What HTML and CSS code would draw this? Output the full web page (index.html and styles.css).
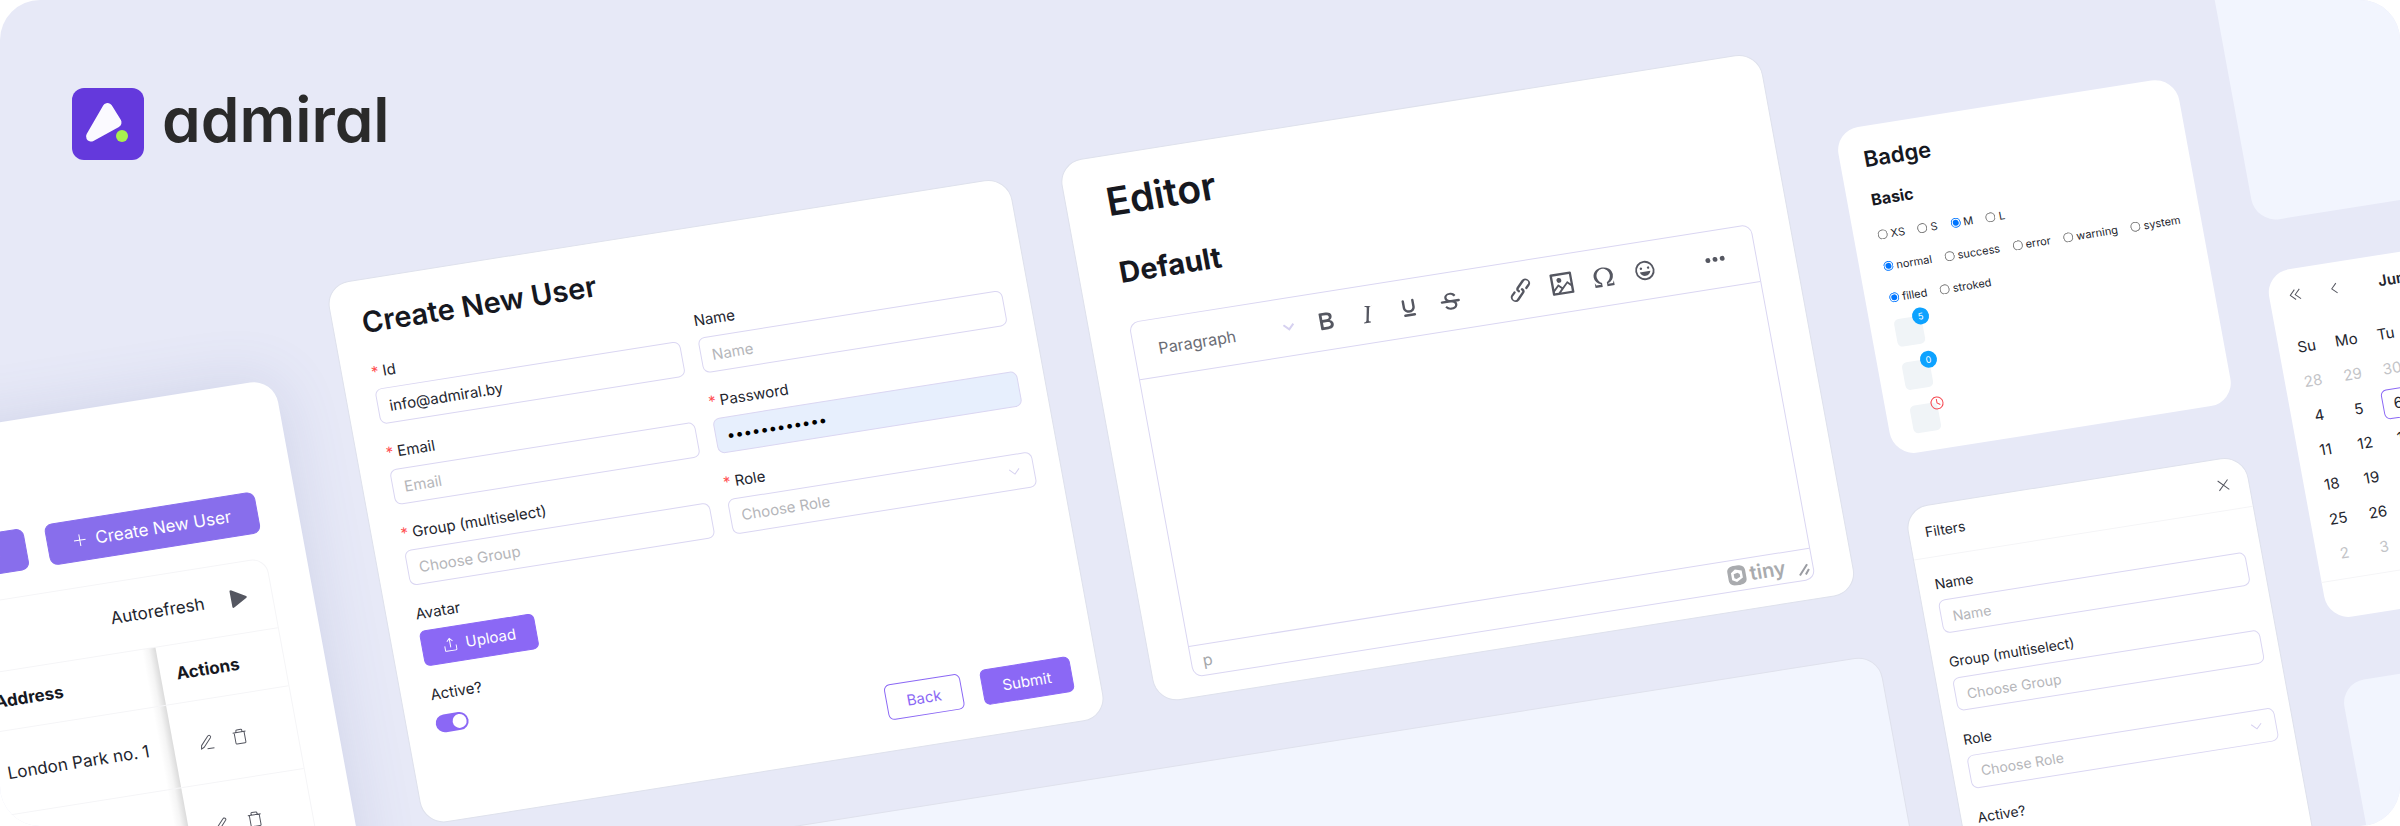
FILE: index.html
```
<!DOCTYPE html>
<html lang="en">
  <head>
    <meta charset="UTF-8" />
    <meta name="viewport" content="width=device-width, initial-scale=1.0" />
    <title>Admiral</title>
    <link rel="stylesheet" href="styles.css">
  </head>
  <body>
    <main class="banner">
      <div class="board">
        <!-- users table -->
        <div class="column column-table">
          <section class="card users">
            <div class="users-buttons">
              <button class="button button-large">Filters</button>
              <button class="button button-large">
                <svg width="12" height="12" viewBox="0 0 12 12" fill="none" stroke="currentColor"><path d="M6 0v12M0 6h12" /></svg>
                Create New User
              </button>
            </div>
            <div class="users-box">
              <div class="users-toolbar">
                <span>Autorefresh</span>
                <button class="icon-button" aria-label="Start autorefresh">
                  <svg width="18" height="18" viewBox="0 0 18 18" fill="#555761" stroke="#555761" stroke-width="2" stroke-linejoin="round"><path d="M2 1l14 8-14 8z" /></svg>
                </button>
              </div>
              <table class="users-table">
                <thead>
                  <tr>
                    <th>Address</th>
                    <th class="sticky">Actions</th>
                  </tr>
                </thead>
                <tbody>
                  <tr>
                    <td>London Park no. 1</td>
                    <td class="sticky">
                      <div class="row-actions">
                        <button class="icon-button" aria-label="Edit">
                          <svg width="18" height="18" viewBox="0 0 18 18" fill="none" stroke="#555761" stroke-linejoin="round"><path d="M3 15.500l.7-3.500L11.500 3.500a1.500 1.500 0 0 1 2.300 2L6 14zM9 16h7" /></svg>
                        </button>
                        <button class="icon-button" aria-label="Delete">
                          <svg width="18" height="18" viewBox="0 0 18 18" fill="none" stroke="#555761" stroke-linejoin="round"><path d="M2.500 4.500h13M4 4.500V15a1 1 0 0 0 1 1h8a1 1 0 0 0 1-1V4.500M6 4.500V3a1 1 0 0 1 1-1h4a1 1 0 0 1 1 1v1.500" /></svg>
                        </button>
                      </div>
                    </td>
                  </tr>
                  <tr>
                    <td>London Park no. 2</td>
                    <td class="sticky">
                      <div class="row-actions">
                        <button class="icon-button" aria-label="Edit">
                          <svg width="18" height="18" viewBox="0 0 18 18" fill="none" stroke="#555761" stroke-linejoin="round"><path d="M3 15.500l.7-3.500L11.500 3.500a1.500 1.500 0 0 1 2.300 2L6 14zM9 16h7" /></svg>
                        </button>
                        <button class="icon-button" aria-label="Delete">
                          <svg width="18" height="18" viewBox="0 0 18 18" fill="none" stroke="#555761" stroke-linejoin="round"><path d="M2.500 4.500h13M4 4.500V15a1 1 0 0 0 1 1h8a1 1 0 0 0 1-1V4.500M6 4.500V3a1 1 0 0 1 1-1h4a1 1 0 0 1 1 1v1.500" /></svg>
                        </button>
                      </div>
                    </td>
                  </tr>
                </tbody>
              </table>
            </div>
          </section>
        </div>

        <div class="column column-main">
          <div class="main-row">
            <!-- create form -->
            <form class="card create">
              <h1 class="create-title">Create New User</h1>
              <div class="create-grid">
                <div class="field">
                  <label class="required" for="user-id">Id</label>
                  <input class="control" id="user-id" type="text" value="info@admiral.by" />
                </div>
                <div class="field">
                  <label for="user-name">Name</label>
                  <input class="control" id="user-name" type="text" placeholder="Name" />
                </div>
                <div class="field">
                  <label class="required" for="user-email">Email</label>
                  <input class="control" id="user-email" type="text" placeholder="Email" />
                </div>
                <div class="field">
                  <label class="required" for="user-password">Password</label>
                  <input class="control autofilled" id="user-password" type="password" value="administrato" />
                </div>
                <div class="field">
                  <label class="required" for="user-group">Group (multiselect)</label>
                  <input class="control" id="user-group" type="text" placeholder="Choose Group" />
                </div>
                <div class="field">
                  <label class="required" for="user-role">Role</label>
                  <div class="select-wrap">
                    <select class="control" id="user-role"><option>Choose Role</option></select>
                    <svg class="chevron" width="12" height="8" viewBox="0 0 12 8" fill="none" stroke="currentColor"><path d="M1 1l5 5 5-5" /></svg>
                  </div>
                </div>
                <div class="field">
                  <label for="user-avatar">Avatar</label>
                  <button class="button upload" id="user-avatar" type="button">
                    <svg width="16" height="16" viewBox="0 0 16 16" fill="none" stroke="currentColor"><path d="M8 11V2M5 4.500L8 1.500l3 3M2 9v4.500a1 1 0 0 0 1 1h10a1 1 0 0 0 1-1V9" /></svg>
                    Upload
                  </button>
                </div>
              </div>
              <div class="field active-field">
                <label for="user-active">Active?</label>
                <input class="switch" id="user-active" type="checkbox" checked />
              </div>
              <div class="create-actions">
                <button class="button button-outline" type="button">Back</button>
                <button class="button" type="button">Submit</button>
              </div>
            </form>

            <!-- text editor -->
            <section class="card editor">
              <h2 class="editor-title">Editor</h2>
              <h3 class="editor-subtitle">Default</h3>
              <div class="editor-box">
                <div class="toolbar">
                  <div class="select-wrap toolbar-format">
                    <select aria-label="Block format"><option>Paragraph</option></select>
                    <svg class="chevron" width="12" height="8" viewBox="0 0 12 8" fill="none" stroke="currentColor" stroke-width="2"><path d="M1 1l5 5 5-5" /></svg>
                  </div>
                  <div class="toolbar-group">
                    <button class="tool" aria-label="Bold"><svg viewBox="0 0 24 24"><path d="M7.800 19c-.3 0-.5 0-.6-.2l-.2-.5V5.700c0-.2 0-.4.2-.5l.6-.2h5c1.500 0 2.700.3 3.500 1 .7.600 1.100 1.400 1.100 2.500a3 3 0 0 1-.6 1.900c-.4.600-1 1-1.600 1.200.4.100.9.300 1.300.6s.8.700 1 1.200c.4.400.5 1 .5 1.600 0 1.300-.4 2.300-1.300 3-.8.700-2.100 1-3.800 1H7.800Zm5-8.300c.6 0 1.200-.1 1.600-.5.4-.3.6-.7.6-1.300 0-1.100-.8-1.700-2.300-1.700H9.300v3.500h3.400Zm.5 6c.7 0 1.300-.1 1.700-.4.4-.4.6-.9.6-1.500s-.2-1-.7-1.400c-.4-.3-1-.4-2-.4H9.400v3.800h4Z" /></svg></button>
                    <button class="tool" aria-label="Italic"><svg viewBox="0 0 24 24"><path d="m16.700 4.700-.1.900h-.3c-.6 0-1 0-1.400.3-.3.300-.4.600-.5 1.100l-2.100 9.800v.6c0 .5.400.8 1.400.8h.2l-.2.800H8l.2-.8h.2c1.100 0 1.800-.5 2-1.500l2-9.800.1-.5c0-.6-.4-.8-1.400-.8h-.3l.2-.9h5.800Z" /></svg></button>
                    <button class="tool" aria-label="Underline"><svg viewBox="0 0 24 24"><path d="M16 5c.6 0 1 .4 1 1v5.500a4 4 0 0 1-.4 1.800l-1 1.400a5.300 5.300 0 0 1-5.500 1 5 5 0 0 1-1.600-1c-.5-.4-.8-.9-1.100-1.400a4 4 0 0 1-.4-1.800V6c0-.6.4-1 1-1s1 .4 1 1v5.500c0 .3 0 .6.2 1l.6.700a3.300 3.300 0 0 0 2.200.8 3.400 3.400 0 0 0 2.200-.8c.3-.2.4-.5.6-.8l.2-.9V6c0-.6.4-1 1-1ZM8 17h8c.6 0 1 .4 1 1s-.4 1-1 1H8a1 1 0 0 1 0-2Z" /></svg></button>
                    <button class="tool" aria-label="Strikethrough"><svg viewBox="0 0 24 24"><path d="M15.600 8.500c-.5-.7-1-1.100-1.300-1.300-.6-.4-1.300-.6-2-.6-2.700 0-2.800 1.700-2.800 2.100 0 1.600 1.800 2 3.200 2.300 4.400.9 4.600 2.800 4.600 3.900 0 1.400-.7 4.100-5 4.100A6.200 6.200 0 0 1 7 16.400l1.500-1.100c.4.600 1.600 2 3.700 2 1.600 0 2.500-.4 3-1.200.4-.8.3-2-.8-2.600-.7-.4-1.600-.7-2.900-1-1-.2-3.900-.8-3.900-3.600C7.600 6 10.300 5 12.400 5c2.900 0 4.200 1.600 4.700 2.400l-1.500 1.100Z" /><path d="M5 11h14a1 1 0 0 1 0 2H5a1 1 0 0 1 0-2Z" /></svg></button>
                  </div>
                  <div class="toolbar-group">
                    <button class="tool" aria-label="Link"><svg viewBox="0 0 24 24"><path d="M6.200 12.300a1 1 0 0 1 1.400 1.400l-2 2a2 2 0 1 0 2.600 2.800l4.800-4.800a1 1 0 0 0 0-1.400 1 1 0 1 1 1.400-1.300 2.900 2.900 0 0 1 0 4L9.600 20a3.900 3.900 0 0 1-5.500-5.500l2-2Zm11.600-.6a1 1 0 0 1-1.400-1.400l2-2a2 2 0 1 0-2.600-2.800L11 10.300a1 1 0 0 0 0 1.400A1 1 0 1 1 9.600 13a2.900 2.900 0 0 1 0-4L14.400 4a3.900 3.900 0 0 1 5.500 5.500l-2 2Z" /></svg></button>
                    <button class="tool" aria-label="Image"><svg viewBox="0 0 24 24"><path fill-rule="evenodd" d="m5 15.700 3.300-3.200c.3-.3.7-.3 1 0L12 15l4.100-4c.3-.4.800-.4 1 0l2 1.900V5H5v10.700ZM5 18V19h3l2.800-2.900-2-2L5 17.900Zm14-3-2.500-2.400-6.400 6.500H19v-4ZM4 3h16c.6 0 1 .4 1 1v16c0 .6-.4 1-1 1H4a1 1 0 0 1-1-1V4c0-.6.4-1 1-1Zm6 8a2 2 0 1 0 0-4 2 2 0 0 0 0 4Z" /></svg></button>
                    <button class="tool" aria-label="Special character"><svg viewBox="0 0 24 24"><path d="M15 18h4l1-2v4h-6v-3.300l1.400-1a6 6 0 0 0 1.800-2.900 6.300 6.300 0 0 0-.1-4.100 5.800 5.800 0 0 0-3-3.200c-.6-.3-1.300-.5-2.100-.5a5.100 5.100 0 0 0-3.900 1.800 6.300 6.300 0 0 0-1.300 6 6.200 6.200 0 0 0 1.800 3l1.400.9V20H4v-4l1 2h4v-.5l-2-1L5.400 15A6.500 6.500 0 0 1 4 11c0-1 .2-1.900.6-2.700A7 7 0 0 1 6.300 6C7.100 5.400 8 5 9 4.500c1-.3 2-.5 3.100-.5a8.800 8.800 0 0 1 5.700 2 7 7 0 0 1 1.700 2.300 6 6 0 0 1 .2 4.800c-.2.700-.6 1.300-1 1.900a7.600 7.600 0 0 1-3.600 2.500v.5Z" /></svg></button>
                    <button class="tool" aria-label="Emoji"><svg viewBox="0 0 24 24"><path fill-rule="evenodd" d="M9 11c.6 0 1-.4 1-1s-.4-1-1-1a1 1 0 0 0-1 1c0 .6.400 1 1 1Zm6 0c.6 0 1-.4 1-1s-.4-1-1-1a1 1 0 0 0-1 1c0 .6.400 1 1 1Zm-3 5.500c2.100 0 4-1.500 4.400-3.500H7.600c.5 2 2.300 3.500 4.400 3.500ZM12 4a8 8 0 1 0 0 16 8 8 0 0 0 0-16Zm0 14.500a6.500 6.500 0 1 1 0-13 6.500 6.500 0 0 1 0 13Z" /></svg></button>
                  </div>
                  <div class="toolbar-group">
                    <button class="tool" aria-label="More"><svg viewBox="0 0 24 24"><circle cx="6" cy="12" r="2" /><circle cx="12" cy="12" r="2" /><circle cx="18" cy="12" r="2" /></svg></button>
                  </div>
                </div>
                <textarea class="editor-area" aria-label="Editor content"></textarea>
                <div class="statusbar">
                  <span class="path">p</span>
                  <a class="tiny" href="#">
                    <svg width="20" height="20" viewBox="0 0 20 20"><path fill-rule="evenodd" d="M10 0c4 0 9 1 9 6v8c0 5-5 6-9 6s-9-1-9-6V6c0-5 5-6 9-6zM9 4L4.500 7v7L9 16.500l6.500-3.500V6z" /><path d="M7 8.500l4-1 2 1.500v3l-4 1.500-2-1z" /></svg>
                    tiny
                  </a>
                  <svg class="resize" width="12" height="12" viewBox="0 0 12 12" fill="none" stroke="#9a9ca2" stroke-width="2"><path d="M1 11L10 1M7 11l4-5" /></svg>
                </div>
              </div>
            </section>
          </div>
          <div class="blank blank-wide"></div>
        </div>

        <div class="column column-side">
          <!-- badges -->
          <section class="card badges">
            <h2 class="badges-title">Badge</h2>
            <h3 class="badges-subtitle">Basic</h3>
            <div class="radios">
              <label><input type="radio" name="size" />XS</label>
              <label><input type="radio" name="size" />S</label>
              <label><input type="radio" name="size" checked />M</label>
              <label><input type="radio" name="size" />L</label>
            </div>
            <div class="radios">
              <label><input type="radio" name="status" checked />normal</label>
              <label><input type="radio" name="status" />success</label>
              <label><input type="radio" name="status" />error</label>
              <label><input type="radio" name="status" />warning</label>
              <label><input type="radio" name="status" />system</label>
            </div>
            <div class="radios">
              <label><input type="radio" name="look" checked />filled</label>
              <label><input type="radio" name="look" />stroked</label>
            </div>
            <div class="badge-list">
              <div class="badge-box"><span class="badge">5</span></div>
              <div class="badge-box"><span class="badge">0</span></div>
              <div class="badge-box">
                <span class="badge badge-icon">
                  <svg width="14" height="14" viewBox="0 0 14 14" fill="none" stroke="#f5464f"><circle cx="7" cy="7" r="6" /><path d="M7 3v4l3 2" /></svg>
                </span>
              </div>
            </div>
          </section>

          <!-- filters -->
          <form class="card filters">
            <div class="filters-head">
              <h2 class="filters-title">Filters</h2>
              <button class="icon-button" type="button" aria-label="Close">
                <svg width="12" height="12" viewBox="0 0 12 12" fill="none" stroke="#555761"><path d="M1 1l10 10M11 1L1 11" /></svg>
              </button>
            </div>
            <div class="filters-body">
              <div class="field">
                <label for="filter-name">Name</label>
                <input class="control" id="filter-name" type="text" placeholder="Name" />
              </div>
              <div class="field">
                <label for="filter-group">Group (multiselect)</label>
                <input class="control" id="filter-group" type="text" placeholder="Choose Group" />
              </div>
              <div class="field">
                <label for="filter-role">Role</label>
                <div class="select-wrap">
                  <select class="control" id="filter-role"><option>Choose Role</option></select>
                  <svg class="chevron" width="12" height="8" viewBox="0 0 12 8" fill="none" stroke="currentColor"><path d="M1 1l5 5 5-5" /></svg>
                </div>
              </div>
              <div class="field">
                <label for="filter-active">Active?</label>
                <input class="switch" id="filter-active" type="checkbox" />
              </div>
            </div>
          </form>
        </div>

        <div class="column column-calendar">
          <div class="blank blank-top"></div>
          <!-- calendar -->
          <section class="card calendar">
            <div class="calendar-head">
              <button class="icon-button" aria-label="Previous year">
                <svg width="12" height="12" viewBox="0 0 12 12" fill="none" stroke="#555761"><path d="M6 1L1 6l5 5M11 1L6 6l5 5" /></svg>
              </button>
              <button class="icon-button" aria-label="Previous month">
                <svg width="12" height="12" viewBox="0 0 12 12" fill="none" stroke="#555761"><path d="M8 1L3 6l5 5" /></svg>
              </button>
              <strong>Jun 2023</strong>
            </div>
            <table class="days">
              <thead>
                <tr><th>Su</th><th>Mo</th><th>Tu</th><th>We</th><th>Th</th><th>Fr</th><th>Sa</th></tr>
              </thead>
              <tbody>
                <tr><td class="muted">28</td><td class="muted">29</td><td class="muted">30</td><td class="muted">31</td><td>1</td><td>2</td><td>3</td></tr>
                <tr><td>4</td><td>5</td><td><span class="today">6</span></td><td>7</td><td>8</td><td>9</td><td>10</td></tr>
                <tr><td>11</td><td>12</td><td>13</td><td>14</td><td>15</td><td>16</td><td>17</td></tr>
                <tr><td>18</td><td>19</td><td>20</td><td>21</td><td>22</td><td>23</td><td>24</td></tr>
                <tr><td>25</td><td>26</td><td>27</td><td>28</td><td>29</td><td>30</td><td class="muted">1</td></tr>
                <tr class="muted"><td>2</td><td>3</td><td>4</td><td>5</td><td>6</td><td>7</td><td>8</td></tr>
              </tbody>
            </table>
            <div class="calendar-foot"></div>
          </section>
          <div class="blank blank-bottom"></div>
        </div>
      </div>

      <header class="brand">
        <svg width="72" height="72" viewBox="0 0 72 72">
          <rect width="72" height="72" rx="12" fill="#6439dc" />
          <path d="M35.500 20l9 14.500L19 48.500z" fill="#fbfaff" stroke="#fbfaff" stroke-width="10" stroke-linejoin="round" />
          <circle cx="50" cy="48" r="6" fill="#a8f04f" />
        </svg>
        <span class="brand-name">admiral</span>
      </header>
    </main>
  </body>
</html>
```
FILE: styles.css
```
* {
  box-sizing: border-box;
}

body {
  margin: 0;
  background-color: white;
  color: #23252e;
  font-family: Inter, "Liberation Sans", sans-serif;
}

h1,
h2,
h3 {
  margin: 0;
  color: #16181f;
  font-weight: 600;
}

button,
input,
select,
textarea {
  font: inherit;
  color: inherit;
}

/* banner: tilted board below, logo above */
.banner {
  display: grid;
  height: 100vh;
  overflow: hidden;
  border-radius: 40px;
  background-color: #e7e9f7;
}

.brand {
  grid-area: 1 / 1;
  align-self: start;
  display: flex;
  align-items: flex-start;
  gap: 18px;
  padding: 88px 72px;
}

.brand-name {
  color: #2a2a2a;
  font-size: 62px;
  line-height: 64px;
  font-weight: 600;
  font-feature-settings: "cv11";
}

.board {
  grid-area: 1 / 1;
  display: grid;
  grid-template-columns: 201px 1462px 345px 345px;
  column-gap: 52px;
  align-items: start;
  transform: rotate(-9deg) skewX(1.4deg);
  transform-origin: 0 0;
}

.column {
  display: flex;
  flex-direction: column;
}

.column-table {
  align-items: flex-end;
  padding-top: 417px;
}

.column-main {
  margin-left: 15px;
  margin-right: -15px;
  padding-top: 326px;
  gap: 58px;
}

.column-side {
  margin-left: 14px;
  margin-right: -14px;
  padding-top: 416px;
  gap: 53px;
}

.column-calendar {
  margin-left: 15px;
  padding-top: 242px;
  gap: 51px;
}

.card {
  border: 1px solid #dee1ec;
  border-radius: 24px;
  background-color: white;
}

.blank {
  border-radius: 24px;
  background-color: #f2f5fe;
}

.blank-wide {
  height: 500px;
  border: 1px solid #dfe1ec;
}

.blank-top {
  height: 331px;
}

.blank-bottom {
  height: 300px;
  margin-top: 13px;
}

/* shared controls */
.button {
  display: inline-flex;
  align-items: center;
  justify-content: center;
  gap: 8px;
  height: 36px;
  padding: 0 20px;
  border: 1px solid #8b68f5;
  border-radius: 6px;
  background-color: #8b68f5;
  color: white;
  font-size: 15px;
}

.button-outline {
  background-color: white;
  color: #8b68f5;
}

.button-large {
  height: 42px;
  padding: 0 26px;
  gap: 10px;
  border-color: #886eec;
  border-radius: 8px;
  background-color: #886eec;
  font-size: 17px;
}

.icon-button {
  display: flex;
  padding: 0;
  border: 0;
  background: none;
}

.field {
  display: flex;
  flex-direction: column;
  align-items: flex-start;
  gap: 6px;
  font-size: 15px;
  line-height: 22px;
}

.required::before {
  content: "*";
  margin-right: 4px;
  color: #ff4d4f;
}

.control {
  width: 100%;
  height: 36px;
  padding: 0 11px;
  border: 1px solid #dad6f2;
  border-radius: 7px;
  background-color: white;
}

.control::placeholder,
select.control {
  color: #b5b6ba;
  opacity: 1;
}

.autofilled {
  background-color: #e7effd;
  color: black;
}

.select-wrap {
  position: relative;
  width: 100%;
  color: #d6d1f0;
}

.select-wrap select {
  appearance: none;
}

.chevron {
  position: absolute;
  top: 50%;
  right: 14px;
  margin-top: -4px;
  pointer-events: none;
}

.switch {
  appearance: none;
  display: flex;
  justify-content: flex-start;
  width: 33px;
  height: 18px;
  margin: 4px 0 0;
  padding: 2px;
  border-radius: 9px;
  background-color: #c9cad3;
}

.switch::before {
  content: "";
  width: 14px;
  height: 14px;
  border-radius: 50%;
  background-color: white;
}

.switch:checked {
  justify-content: flex-end;
  background-color: #8b68f5;
}

/* users table */
.users {
  width: 390px;
  padding: 108px 40px 40px;
  border: 0;
  box-shadow: 0 0 60px rgba(90, 100, 160, 0.16);
}

.users-buttons {
  display: flex;
  justify-content: flex-end;
  gap: 21px;
  margin-bottom: 25px;
  white-space: nowrap;
}

.users-buttons .button {
  flex-shrink: 0;
}

.users-box {
  border: 1px solid #f5f5f7;
  border-radius: 16px;
  font-size: 17px;
}

.users-toolbar {
  display: flex;
  align-items: center;
  justify-content: flex-end;
  gap: 26px;
  height: 70px;
  padding-right: 24px;
}

.users-table {
  width: 100%;
  border-collapse: collapse;
}

.users-table th,
.users-table td {
  padding: 0 16px;
  border-top: 1px solid #f5f5f7;
  text-align: left;
  white-space: nowrap;
}

.users-table th {
  height: 59px;
  color: #16181f;
  font-weight: 700;
}

.users-table td {
  height: 84px;
}

.users-table .sticky {
  position: relative;
  width: 124px;
}

/* shade left of the pinned column */
.users-table .sticky::before {
  content: "";
  position: absolute;
  top: 0;
  bottom: 0;
  left: -14px;
  width: 14px;
  background: linear-gradient(to left, rgba(0, 0, 0, 0.14), rgba(0, 0, 0, 0.04) 50%, transparent);
}

.row-actions {
  display: flex;
  gap: 16px;
  padding-left: 8px;
}

/* create form */
.main-row {
  display: flex;
  align-items: flex-start;
  gap: 51px;
}

.create {
  width: 692px;
  margin-top: 6px;
  padding: 25px 26px 30px 29px;
}

.create-title {
  margin-bottom: 21px;
  font-size: 29px;
  line-height: 36px;
}

.create-grid {
  display: grid;
  grid-template-columns: 1fr 1fr;
  gap: 18px;
}

.upload {
  width: 116px;
}

.active-field {
  margin-top: 18px;
}

.create-actions {
  display: flex;
  justify-content: flex-end;
  gap: 20px;
  margin-top: 22px;
}

/* text editor */
.editor {
  width: 710px;
  padding: 24px 38px 19px 40px;
}

.editor-title {
  font-size: 39px;
  line-height: 44px;
}

.editor-subtitle {
  margin: 32px 0;
  font-size: 29px;
  line-height: 36px;
  font-weight: 700;
}

.editor-box {
  display: flex;
  flex-direction: column;
  border: 1px solid #dad6f2;
  border-radius: 10px;
}

.toolbar {
  display: flex;
  align-items: center;
  gap: 29px;
  height: 58px;
  padding-left: 24px;
  border-bottom: 1px solid #dad6f2;
}

.toolbar-format {
  width: 148px;
  margin-right: -29px;
}

.toolbar-format select {
  width: 100%;
  padding: 0;
  border: 0;
  background: none;
  color: #6a6c74;
  font-size: 16px;
}

.toolbar-format .chevron {
  right: 10px;
}

.toolbar-group {
  display: flex;
}

.tool {
  display: flex;
  justify-content: center;
  width: 42px;
  padding: 0;
  border: 0;
  background: none;
}

.tool svg {
  width: 29px;
  height: 29px;
  fill: #555761;
}

.editor-area {
  height: 270px;
  padding: 16px;
  border: 0;
  background: none;
  resize: none;
}

.statusbar {
  display: flex;
  align-items: center;
  height: 31px;
  padding: 0 3px 0 11px;
  border-top: 1px solid #dad6f2;
  color: #a5a7ab;
  font-size: 16px;
}

.tiny {
  display: flex;
  align-items: center;
  gap: 3px;
  margin-left: auto;
  color: #a9abae;
  font-size: 20px;
  line-height: 24px;
  font-weight: 600;
  text-decoration: none;
}

.tiny svg {
  fill: currentColor;
}

.resize {
  align-self: flex-end;
  margin: 0 0 4px 12px;
}

/* badges */
.badges {
  height: 331px;
  padding: 19px 24px;
  border: 0;
}

.badges-title {
  font-size: 22px;
  line-height: 28px;
}

.badges-subtitle {
  margin: 17px 0 16px;
  font-size: 16px;
  line-height: 20px;
  font-weight: 700;
}

.radios {
  display: flex;
  gap: 13px;
  height: 32px;
  font-size: 11px;
  line-height: 20px;
}

.radios label {
  display: flex;
  align-items: center;
  gap: 3px;
  height: 20px;
}

.radios input {
  width: 10px;
  height: 10px;
  margin: 0;
}

.badge-list {
  display: flex;
  flex-direction: column;
  align-items: flex-start;
  gap: 16px;
}

.badge-box {
  position: relative;
  width: 28px;
  height: 28px;
  border-radius: 5px;
  background-color: #f0f4f7;
}

.badge {
  position: absolute;
  top: -8px;
  right: -8px;
  width: 17px;
  height: 17px;
  border-radius: 50%;
  background-color: #0da2ff;
  color: white;
  font-size: 9px;
  line-height: 17px;
  text-align: center;
}

.badge-icon {
  display: flex;
  align-items: center;
  justify-content: center;
  background: none;
}

/* filters */
.filters {
  padding-bottom: 60px;
}

.filters-head {
  display: flex;
  align-items: center;
  justify-content: space-between;
  height: 52px;
  padding: 0 19px 0 16px;
  border-bottom: 1px solid #f5f5f7;
}

.filters-title {
  color: #23252e;
  font-size: 14px;
  font-weight: 400;
}

.filters-body {
  display: flex;
  flex-direction: column;
  gap: 18px;
  padding: 16px;
}

.filters .field {
  gap: 5px;
  font-size: 14px;
}

.filters .control {
  height: 34px;
}

/* calendar */
.calendar {
  height: 353px;
  padding: 0 8px;
  border: 0;
}

.calendar-head {
  display: flex;
  align-items: center;
  gap: 28px;
  height: 51px;
  padding-left: 12px;
  font-size: 15px;
}

.calendar-head strong {
  margin-left: 10px;
  font-weight: 600;
}

.days {
  margin-top: 10px;
  border-collapse: collapse;
  table-layout: fixed;
  width: 280px;
  font-size: 15px;
  text-align: center;
}

.days th,
.days td {
  height: 35px;
  padding: 0;
  font-weight: 400;
}

.days .muted {
  color: #c3c4c8;
}

.today {
  display: block;
  width: 32px;
  margin: 0 auto;
  border: 1px solid #8b68f5;
  border-radius: 6px;
  line-height: 28px;
}

.calendar-foot {
  margin: 8px -8px 0;
  border-top: 1px solid #f5f5f7;
}
```
